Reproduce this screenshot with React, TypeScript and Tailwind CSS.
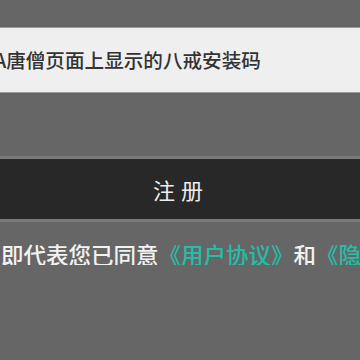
export default function App() {
    return (
        <div
            className="w-[360px] h-[360px] overflow-hidden bg-[#666666]"
            style={{ fontFamily: '"Noto Sans CJK SC", "Noto Sans", sans-serif' }}
        >
            {/* Install code input */}
            <div className="mt-[27px] h-[66px] flex items-center overflow-hidden bg-[#efefef] border-y border-[#9c9c9c]">
                <span className="-ml-[6px] whitespace-nowrap text-[19.6px] font-medium leading-none text-[#333333]">
                    A唐僧页面上显示的八戒安装码
                </span>
            </div>

            {/* Register button */}
            <div className="mt-[63px] h-[66px] flex items-center justify-center bg-[#282828] border-y-[3px] border-[#7a7a7a]">
                <span className="text-[22px] leading-none tracking-[6px] text-[#eeeeee] pl-[2px]">注册</span>
            </div>

            {/* Agreement */}
            <div className="mt-[21px] whitespace-nowrap overflow-hidden text-[22.5px] font-medium leading-[22px] pl-[1px] text-[#f2f2f2]">
                即代表您已同意<span className="text-[#22bfa6]">《用户协议》</span>和<span className="text-[#22bfa6]">《隐私政策》</span>
            </div>
        </div>
    );
}
